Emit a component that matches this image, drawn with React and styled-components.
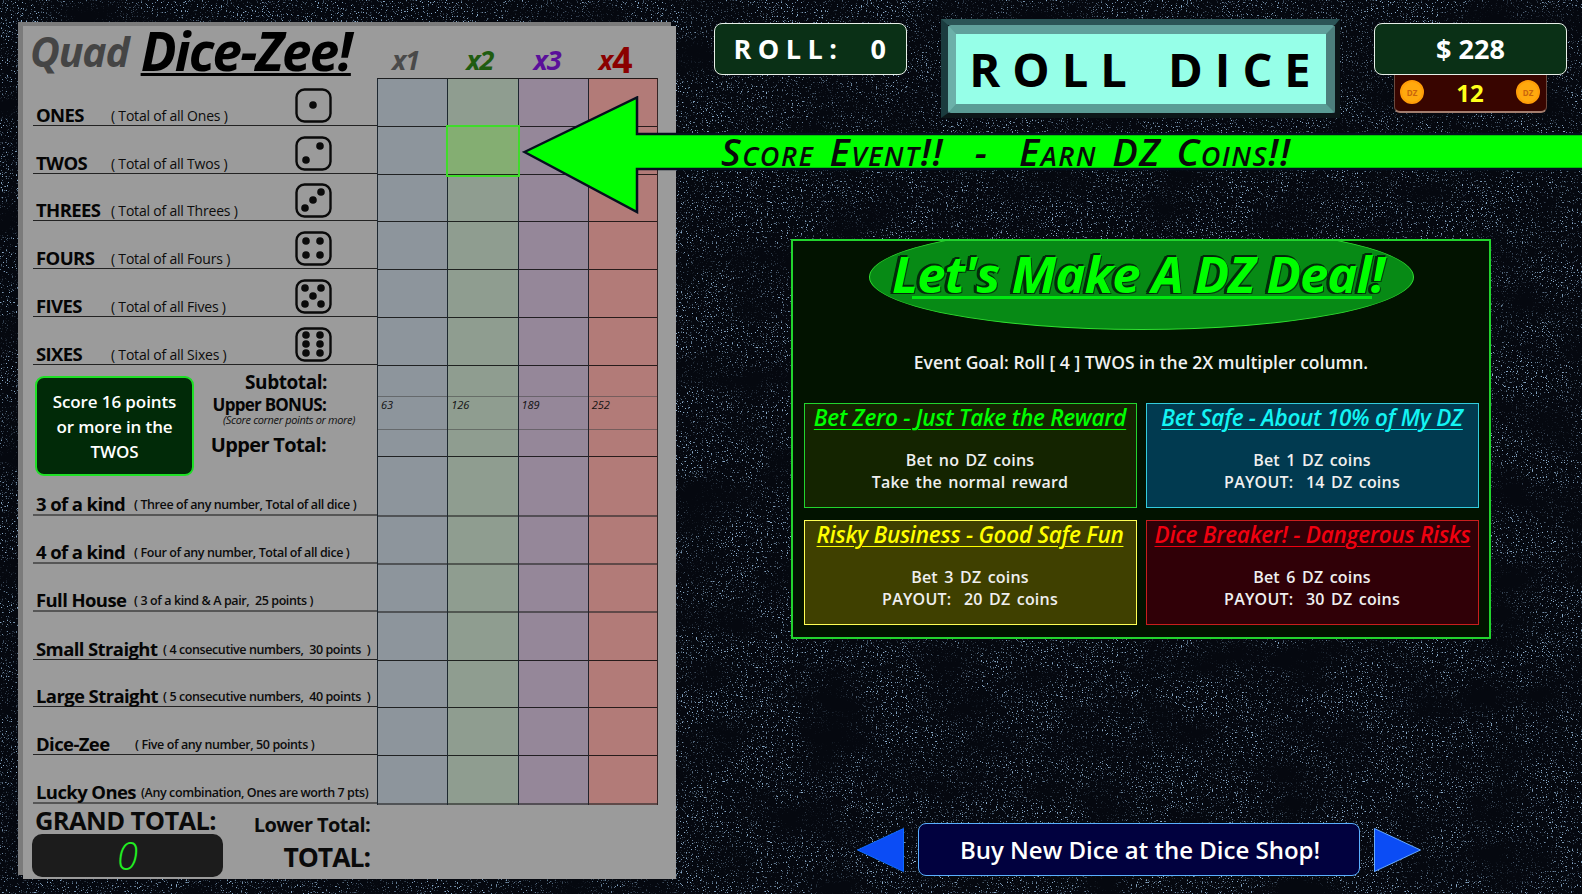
import styled, { createGlobalStyle } from 'styled-components';

const noiseSvg = `<svg xmlns="http://www.w3.org/2000/svg" width="1582" height="894">
<filter id="n" x="0" y="0" width="100%" height="100%" color-interpolation-filters="sRGB">
<feTurbulence type="fractalNoise" baseFrequency="0.8" numOctaves="2" seed="4" result="fine"/>
<feColorMatrix in="fine" type="matrix" values="0 0 0 0 0.55  0 0 0 0 0.68  0 0 0 0 0.8  8 0 0 0 -5" result="speck"/>
<feTurbulence type="fractalNoise" baseFrequency="0.015 0.025" numOctaves="4" seed="11" result="coarse"/>
<feColorMatrix in="coarse" type="matrix" values="0 0 0 0 1  0 0 0 0 1  0 0 0 0 1  2.8 0 0 0 -0.6" result="mask"/>
<feComposite in="speck" in2="mask" operator="in"/>
</filter>
<rect width="1582" height="894" fill="#05080f"/>
<rect width="1582" height="894" filter="url(#n)"/>
</svg>`;

const GlobalStyle = createGlobalStyle`
  html, body {
    margin: 0;
    padding: 0;
    background: #05080f;
  }
  * {
    box-sizing: border-box;
  }
`;

const FONT = `"Open Sans", "Noto Sans", sans-serif`;

const Page = styled.div`
  position: relative;
  display: flex;
  width: 1582px;
  height: 894px;
  overflow: hidden;
  font-family: ${FONT};
  background-image: url("data:image/svg+xml,${encodeURIComponent(noiseSvg)}");
`;

/* score card */
const Card = styled.div`
  flex: none;
  width: 653px;
  height: 853px;
  margin: 26px 0 0 23px;
  padding-left: 10px;
  background: #9b9b9b;
  box-shadow: -5px -4px 0 #7b7b7b;
`;

const CardHeader = styled.div`
  display: flex;
  height: 52px;
`;

const TitleBox = styled.div`
  display: flex;
  align-items: flex-start;
  width: 344px;
  white-space: nowrap;
`;

const TitleQuad = styled.span`
  margin-left: -3px;
  margin-right: 12px;
  font-size: 41px;
  line-height: 50px;
  font-style: italic;
  font-weight: 700;
  letter-spacing: -1.2px;
  color: #454545;
`;

const TitleMain = styled.span`
  font-size: 53px;
  line-height: 50px;
  font-style: italic;
  font-weight: 700;
  letter-spacing: -1.8px;
  color: #000;
  text-decoration: underline;
  text-decoration-thickness: 3px;
  text-underline-offset: 2px;
`;

const Multiplier = styled.div`
  width: 70.25px;
  padding: 17px 0 0 ${(p) => p.$pad}px;
  font-size: 27px;
  line-height: 34px;
  font-style: italic;
  font-weight: 700;
  letter-spacing: -1px;
  color: ${(p) => p.$color};
  white-space: nowrap;
`;

const BigDigit = styled.span`
  font-size: 36px;
  line-height: 30px;
  font-style: normal;
  vertical-align: -3px;
`;

const CardBody = styled.div`
  display: flex;
`;

const Labels = styled.div`
  width: 344px;
`;

const lines = {
  dark: '1px solid rgba(0, 0, 0, 0.78)',
  soft: '1px solid rgba(70, 70, 70, 0.55)',
  thick: '2px solid rgba(40, 40, 40, 0.6)',
};

const LabelRow = styled.div`
  display: flex;
  align-items: flex-end;
  height: ${(p) => p.$height}px;
  padding-left: 3px;
  border-bottom: ${(p) => lines[p.$line]};
  white-space: pre;
`;

const RowName = styled.span`
  flex: none;
  width: ${(p) => p.$width}px;
  font-size: 18.5px;
  line-height: 21px;
  font-weight: 700;
  letter-spacing: -0.6px;
  color: #050505;
`;

const RowHint = styled.span`
  font-size: ${(p) => (p.$bold ? 12.5 : 14)}px;
  line-height: ${(p) => (p.$bold ? 18 : 19)}px;
  font-weight: ${(p) => (p.$bold ? 600 : 500)};
  letter-spacing: ${(p) => (p.$bold ? -0.4 : -0.2)}px;
  color: #0c0c0c;
`;

const DieSvg = styled.svg`
  flex: none;
  width: 37px;
  height: 35px;
  margin: 0 45px 2px auto;
  display: block;
`;

const BonusBlock = styled.div`
  display: flex;
  height: 115px;
`;

const BonusBox = styled.div`
  flex: none;
  display: flex;
  align-items: center;
  justify-content: center;
  width: 159px;
  height: 100px;
  margin: 11px 0 0 2px;
  padding: 0 10px;
  background: #012a08;
  border: 2.5px solid #1fe026;
  border-radius: 9px;
  color: #fff;
  font-size: 17px;
  line-height: 25px;
  font-weight: 600;
  text-align: center;
  letter-spacing: -0.1px;
`;

const BonusLabels = styled.div`
  flex: 1;
  display: flex;
  flex-direction: column;
  align-items: flex-end;
  padding-top: 6px;
  white-space: nowrap;
`;

const SubtotalLabel = styled.div`
  margin-right: 50px;
  font-size: 19px;
  line-height: 22px;
  font-weight: 700;
  letter-spacing: -0.45px;
  color: #050505;
`;

const BonusLabel = styled(SubtotalLabel)`
  margin-right: 51px;
  margin-top: 2px;
  font-size: 17px;
  line-height: 19px;
  letter-spacing: -0.75px;
`;

const BonusNote = styled.div`
  margin: 0 22px 0 0;
  font-size: 11px;
  line-height: 12px;
  font-style: italic;
  letter-spacing: -0.35px;
  color: #111;
`;

const TotalLabel = styled(SubtotalLabel)`
  margin: 7px 51px 0 0;
  font-size: 20px;
  line-height: 24px;
  letter-spacing: -0.65px;
`;

const ScoreColumn = styled.div`
  width: 70.25px;
  background: ${(p) => p.$color};
  border-top: 1px solid rgba(0, 0, 0, 0.8);
  border-left: 1px solid rgba(10, 20, 30, 0.85);
  border-right: ${(p) => (p.$last ? '1px solid rgba(0, 0, 0, 0.7)' : 'none')};
`;

const ScoreCell = styled.div`
  position: relative;
  height: ${(p) => p.$height}px;
  padding: 1px 0 0 3px;
  border-bottom: ${(p) => lines[p.$line]};
  font-size: 11px;
  line-height: 14px;
  font-style: italic;
  color: #111;
  ${(p) =>
    p.$active &&
    `
    z-index: 1;
    background: #84ae72;
    outline: 2px solid #3fdc2b;
  `}
`;

const CardFooter = styled.div`
  display: flex;
  width: 344px;
`;

const GrandColumn = styled.div`
  flex: none;
  width: 191px;
  margin-left: -1px;
  padding-top: 2px;
`;

const GrandLabel = styled.div`
  margin-left: 3px;
  font-size: 25.5px;
  line-height: 27px;
  font-weight: 700;
  letter-spacing: -0.6px;
  color: #0a0a0a;
  white-space: nowrap;
`;

const GrandValue = styled.div`
  height: 43px;
  background: #1c1c1c;
  border-radius: 10px;
  text-align: center;
  font-size: 38px;
  line-height: 43px;
  font-style: italic;
  font-weight: 300;
  color: #22ee22;
`;

const TotalsColumn = styled.div`
  flex: 1;
  display: flex;
  flex-direction: column;
  align-items: flex-end;
  padding: 8px 7px 0 0;
  white-space: nowrap;
`;

const LowerLabel = styled.div`
  font-size: 20px;
  line-height: 24px;
  font-weight: 700;
  letter-spacing: -0.6px;
  color: #0a0a0a;
`;

const GrandSum = styled(LowerLabel)`
  margin-top: 4px;
  font-size: 26.5px;
  line-height: 32px;
  letter-spacing: -1px;
`;

/* right side */
const Stage = styled.div`
  flex: 1;
  display: flex;
  flex-direction: column;
  padding: 19px 0 0 38px;
`;

const TopBar = styled.div`
  display: flex;
  align-items: flex-start;
  height: 99px;
`;

const InfoBox = styled.div`
  width: 193px;
  height: 52px;
  background: #0a3016;
  border: 1px solid #e8f0e8;
  border-radius: 8px;
  color: #fff;
  font-weight: 700;
  text-align: center;
  line-height: 50px;
  white-space: pre;
`;

const RollBox = styled(InfoBox)`
  margin: 4px 34px 0 0;
  padding-left: 5px;
  font-size: 27px;
  letter-spacing: 6.5px;
`;

const RollOuter = styled.div`
  width: 399px;
  height: 99px;
  border-style: solid;
  border-width: 6px 5px 5px 7px;
  border-color: #2b5456 #0c1618 #0c1618 #1b3b3e;
`;

const RollButton = styled.div`
  width: 100%;
  height: 100%;
  display: flex;
  align-items: center;
  justify-content: center;
  padding-left: 10px;
  background: #96ffe8;
  border-style: solid;
  border-width: 9px 9px 9px 8px;
  border-color: #60a09b #4c7f7c #5a9c95 #6cb0a9;
  border-radius: 3px;
  color: #000;
  font-size: 47px;
  font-weight: 700;
  letter-spacing: 12px;
  word-spacing: 5px;
  white-space: pre;
`;

const PurseColumn = styled.div`
  display: flex;
  flex-direction: column;
  align-items: center;
  margin: 4px 0 0 34px;
`;

const MoneyBox = styled(InfoBox)`
  font-size: 27px;
`;

const CoinBar = styled.div`
  display: flex;
  align-items: center;
  justify-content: space-between;
  width: 153px;
  height: 38px;
  padding: 0 6px 2px 5px;
  background: #380500;
  border-bottom: 2px solid #a47d6d;
  border-left: 1px solid #6b4a3e;
  border-right: 1px solid #6b4a3e;
  border-radius: 0 0 6px 6px;
  color: #ffff1a;
  font-size: 24px;
  font-weight: 700;
`;

const Coin = styled.div`
  display: flex;
  align-items: center;
  justify-content: center;
  width: 24px;
  height: 24px;
  border-radius: 50%;
  background: #ffa90e;
  border: 2px solid #ff9d08;
  color: #c9650c;
  font-size: 8px;
  font-weight: 700;
`;

const DealPanel = styled.div`
  position: relative;
  display: flex;
  flex-direction: column;
  align-items: center;
  width: 700px;
  height: 400px;
  margin: 121px 0 0 77px;
  padding: 0 10px;
  overflow: hidden;
  background: #021300;
  border: 2px solid #22d42e;
`;

const Oval = styled.div`
  flex: none;
  display: flex;
  align-items: center;
  justify-content: center;
  width: 545px;
  height: 106px;
  margin-top: -17px;
  background: #078a15;
  border: 1px solid #2fe030;
  border-radius: 50%;
`;

const OvalTitle = styled.div`
  position: relative;
  margin: -8px 6px 0 0;
  font-size: 51px;
  line-height: 58px;
  font-style: italic;
  font-weight: 700;
  letter-spacing: -1.1px;
  color: #00ff00;
  white-space: nowrap;
  text-shadow: -3px -1px 0 #032b0a, -3px 1px 0 #032b0a, -1px -2px 0 #032b0a, 1px 1px 0 #04400c;

  &::after {
    content: '';
    position: absolute;
    left: 20px;
    right: 12px;
    bottom: 3px;
    height: 3px;
    background: #00e810;
  }
`;

const EventGoal = styled.div`
  margin-top: 20px;
  font-size: 17.5px;
  line-height: 24px;
  font-weight: 600;
  color: #f0f0f0;
`;

const DealGrid = styled.div`
  display: grid;
  grid-template-columns: 333px 333px;
  grid-auto-rows: 105px;
  gap: 12px 9px;
  margin-top: 29px;
`;

const DealCard = styled.div`
  padding: 0 8px;
  background: ${(p) => p.$bg};
  border: 1.5px solid ${(p) => p.$accent};
  text-align: center;
  color: #efefef;
  font-size: 16px;
  line-height: 22px;
  font-weight: 600;
  letter-spacing: 0.2px;
  word-spacing: 2px;
`;

const DealTitle = styled.div`
  margin: 0 0 17px;
  font-size: 22.5px;
  line-height: 28px;
  font-style: italic;
  font-weight: 600;
  letter-spacing: -0.25px;
  word-spacing: 0;
  color: ${(p) => p.$accent};
  white-space: nowrap;
  text-decoration: underline;
  text-decoration-thickness: 1px;
  text-underline-offset: 3px;
`;

const DealLine = styled.div`
  white-space: pre;
`;

const ShopRow = styled.div`
  display: flex;
  align-items: center;
  gap: 14px;
  margin: 184px 0 0 143px;
`;

const ShopArrow = styled.svg`
  flex: none;
  display: block;
  width: 47px;
  height: 44px;
`;

const ShopButton = styled.div`
  width: 442px;
  height: 53px;
  padding-left: 2px;
  background: #01013f;
  border: 1px solid #5ab0ff;
  border-radius: 8px;
  color: #fff;
  font-size: 24px;
  line-height: 51px;
  font-weight: 600;
  text-align: center;
`;

/* banner lying over the card and the page */
const EventArrow = styled.div`
  position: absolute;
  top: 96px;
  left: 522px;
  width: 1060px;
  height: 118px;
`;

const ArrowSvg = styled.svg`
  display: block;
  width: 1060px;
  height: 118px;
`;

const BannerText = styled.div`
  position: absolute;
  top: 33px;
  left: 199px;
  font-size: 38px;
  line-height: 44px;
  font-style: italic;
  font-weight: 600;
  font-variant: small-caps;
  letter-spacing: 1.5px;
  word-spacing: 4px;
  color: #0a0a0a;
  white-space: pre;
`;

const PIPS = {
  1: [[18, 17]],
  2: [[25, 10], [11, 24]],
  3: [[26, 9], [18, 17], [10, 25]],
  4: [[11, 10], [25, 10], [11, 24], [25, 24]],
  5: [[10, 9], [26, 9], [18, 17], [10, 25], [26, 25]],
  6: [[11, 8], [25, 8], [11, 17], [25, 17], [11, 26], [25, 26]],
};

const Die = ({ value }) => (
  <DieSvg viewBox="0 0 37 35">
    <rect x="1.5" y="1.5" width="34" height="32" rx="8" fill="none" stroke="#0a0a0a" strokeWidth="2.4" />
    {PIPS[value].map(([cx, cy]) => (
      <circle key={`${cx}-${cy}`} cx={cx} cy={cy} r="3.8" fill="#0a0a0a" />
    ))}
  </DieSvg>
);

const upperRows = [
  { name: 'ONES', hint: '( Total of all Ones )', die: 1, height: 48 },
  { name: 'TWOS', hint: '( Total of all Twos )', die: 2, height: 48 },
  { name: 'THREES', hint: '( Total of all Threes )', die: 3, height: 47 },
  { name: 'FOURS', hint: '( Total of all Fours )', die: 4, height: 48 },
  { name: 'FIVES', hint: '( Total of all Fives )', die: 5, height: 48 },
  { name: 'SIXES', hint: '( Total of all Sixes )', die: 6, height: 48 },
];

const lowerRows = [
  { name: '3 of a kind', hint: '( Three of any number, Total of all dice )', width: 98, height: 36, line: 'thick' },
  { name: '4 of a kind', hint: '( Four of any number, Total of all dice )', width: 98, height: 48, line: 'thick' },
  { name: 'Full House', hint: '( 3 of a kind & A pair,  25 points )', width: 98, height: 48, line: 'thick' },
  { name: 'Small Straight', hint: '( 4 consecutive numbers,  30 points  )', width: 127, height: 48, line: 'dark' },
  { name: 'Large Straight', hint: '( 5 consecutive numbers,  40 points  )', width: 127, height: 47, line: 'dark' },
  { name: 'Dice-Zee', hint: '( Five of any number, 50 points )', width: 99, height: 48, line: 'dark' },
  { name: 'Lucky Ones', hint: '(Any combination, Ones are worth 7 pts)', width: 105, height: 49, line: 'thick' },
];

const columns = [
  { key: 'x1', color: '#8d959c', bonus: '63' },
  { key: 'x2', color: '#8f9d90', bonus: '126', activeRow: 1 },
  { key: 'x3', color: '#958799', bonus: '189' },
  { key: 'x4', color: '#b27b78', bonus: '252', last: true },
];

const cellRows = [
  ...upperRows.map((r) => ({ height: r.height, line: 'dark' })),
  { height: 31, line: 'soft' },
  { height: 32.5, line: 'soft', bonus: true },
  { height: 27.5, line: 'dark' },
  { height: 60, line: 'thick' },
  ...lowerRows.slice(1).map((r) => ({ height: r.height, line: r.line })),
];

const deals = [
  {
    title: 'Bet Zero - Just Take the Reward',
    accent: '#00ff00',
    border: '#22d42e',
    bg: '#142400',
    body: ['Bet no DZ coins', 'Take the normal reward'],
  },
  {
    title: 'Bet Safe - About 10% of My DZ',
    accent: '#14f4f4',
    border: '#33ccdd',
    bg: '#013a50',
    body: ['Bet 1 DZ coins', 'PAYOUT:  14 DZ coins'],
  },
  {
    title: 'Risky Business - Good Safe Fun',
    accent: '#ffff00',
    border: '#ffff55',
    bg: '#3f4000',
    body: ['Bet 3 DZ coins', 'PAYOUT:  20 DZ coins'],
  },
  {
    title: 'Dice Breaker! - Dangerous Risks',
    accent: '#f00010',
    border: '#c81e1e',
    bg: '#300007',
    body: ['Bet 6 DZ coins', 'PAYOUT:  30 DZ coins'],
  },
];

const App = () => {
  return (
    <Page>
      <GlobalStyle />
      <Card>
        <CardHeader>
          <TitleBox>
            <TitleQuad>Quad</TitleQuad>
            <TitleMain>Dice-Zee!</TitleMain>
          </TitleBox>
          <Multiplier $color="#4a4a4a" $pad={15}>x1</Multiplier>
          <Multiplier $color="#1f5c10" $pad={19}>x2</Multiplier>
          <Multiplier $color="#5a0f9a" $pad={16}>x3</Multiplier>
          <Multiplier $color="#8b0000" $pad={11}>x<BigDigit>4</BigDigit></Multiplier>
        </CardHeader>
        <CardBody>
          <Labels>
            {upperRows.map((r) => (
              <LabelRow key={r.name} $height={r.height} $line="dark">
                <RowName $width={75}>{r.name}</RowName>
                <RowHint>{r.hint}</RowHint>
                <Die value={r.die} />
              </LabelRow>
            ))}
            <BonusBlock>
              <BonusBox>Score 16 points or more in the TWOS</BonusBox>
              <BonusLabels>
                <SubtotalLabel>Subtotal:</SubtotalLabel>
                <BonusLabel>Upper BONUS:</BonusLabel>
                <BonusNote>(Score corner points or more)</BonusNote>
                <TotalLabel>Upper Total:</TotalLabel>
              </BonusLabels>
            </BonusBlock>
            {lowerRows.map((r) => (
              <LabelRow key={r.name} $height={r.height} $line={r.line}>
                <RowName $width={r.width}>{r.name}</RowName>
                <RowHint $bold>{r.hint}</RowHint>
              </LabelRow>
            ))}
          </Labels>
          {columns.map((c) => (
            <ScoreColumn key={c.key} $color={c.color} $last={c.last}>
              {cellRows.map((row, i) => (
                <ScoreCell key={i} $height={row.height} $line={row.line} $active={c.activeRow === i}>
                  {row.bonus ? c.bonus : null}
                </ScoreCell>
              ))}
            </ScoreColumn>
          ))}
        </CardBody>
        <CardFooter>
          <GrandColumn>
            <GrandLabel>GRAND TOTAL:</GrandLabel>
            <GrandValue>0</GrandValue>
          </GrandColumn>
          <TotalsColumn>
            <LowerLabel>Lower Total:</LowerLabel>
            <GrandSum>TOTAL:</GrandSum>
          </TotalsColumn>
        </CardFooter>
      </Card>

      <Stage>
        <TopBar>
          <RollBox>{'ROLL:  0'}</RollBox>
          <RollOuter>
            <RollButton>ROLL DICE</RollButton>
          </RollOuter>
          <PurseColumn>
            <MoneyBox>$ 228</MoneyBox>
            <CoinBar>
              <Coin>DZ</Coin>
              12
              <Coin>DZ</Coin>
            </CoinBar>
          </PurseColumn>
        </TopBar>

        <DealPanel>
          <Oval>
            <OvalTitle>Let's Make A DZ Deal!</OvalTitle>
          </Oval>
          <EventGoal>Event Goal: Roll [ 4 ] TWOS in the 2X multipler column.</EventGoal>
          <DealGrid>
            {deals.map((d) => (
              <DealCard key={d.title} $bg={d.bg} $accent={d.border}>
                <DealTitle $accent={d.accent}>{d.title}</DealTitle>
                {d.body.map((line) => (
                  <DealLine key={line}>{line}</DealLine>
                ))}
              </DealCard>
            ))}
          </DealGrid>
        </DealPanel>

        <ShopRow>
          <ShopArrow viewBox="0 0 47 44">
            <polygon points="46.5,0.5 46.5,43.5 0.5,22" fill="#0b4cf5" stroke="#0f6cff" />
          </ShopArrow>
          <ShopButton>Buy New Dice at the Dice Shop!</ShopButton>
          <ShopArrow viewBox="0 0 47 44">
            <polygon points="0.5,0.5 0.5,43.5 46.5,22" fill="#0b4cf5" stroke="#66aaff" />
          </ShopArrow>
        </ShopRow>
      </Stage>

      <EventArrow>
        <ArrowSvg viewBox="0 0 1060 118">
          <polygon
            points="2.5,56 115,1.5 115,38 1062,38 1062,73 115,73 115,116"
            fill="#00ff00"
            stroke="#06101e"
            strokeWidth="2.5"
          />
        </ArrowSvg>
        <BannerText>{'Score Event!!  -  Earn DZ Coins!!'}</BannerText>
      </EventArrow>
    </Page>
  );
};

export default App;
